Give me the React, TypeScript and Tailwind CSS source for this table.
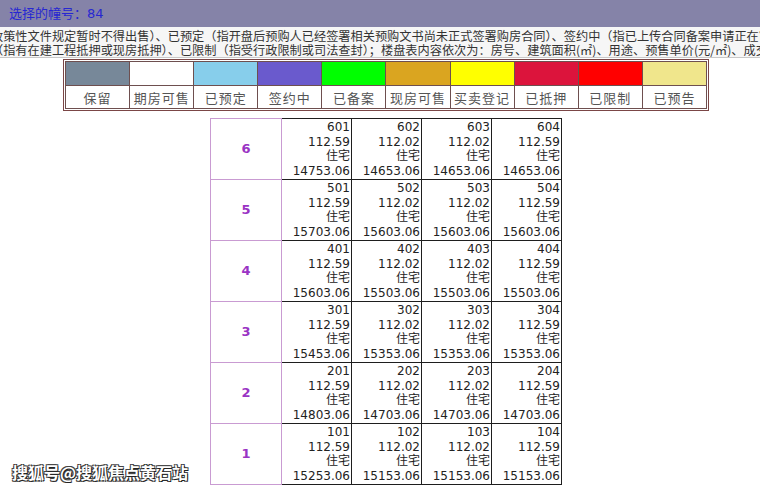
const legend = [
  { label: "保留", color: "bg-[#778899]" },
  { label: "期房可售", color: "bg-white" },
  { label: "已预定", color: "bg-[#87ceeb]" },
  { label: "签约中", color: "bg-[#6a5acd]" },
  { label: "已备案", color: "bg-[#00ff00]" },
  { label: "现房可售", color: "bg-[#daa520]" },
  { label: "买卖登记", color: "bg-[#ffff00]" },
  { label: "已抵押", color: "bg-[#dc143c]" },
  { label: "已限制", color: "bg-[#ff0000]" },
  { label: "已预告", color: "bg-[#f0e68c]" },
];

// floor, [unit price for x01, unit price for x02..x04]
const floors: [number, string, string][] = [
  [6, "14753.06", "14653.06"],
  [5, "15703.06", "15603.06"],
  [4, "15603.06", "15503.06"],
  [3, "15453.06", "15353.06"],
  [2, "14803.06", "14703.06"],
  [1, "15253.06", "15153.06"],
];

const areas = ["112.59", "112.02", "112.02", "112.59"];

export default function App() {
  return (
    <div className="relative h-[491px] w-[760px] overflow-hidden bg-white font-['DejaVu_Sans','Noto_Sans_CJK_SC',sans-serif]">
      <div className="flex h-[27px] items-center bg-[#8583a8] pl-[9px] text-[13px] text-[#2727d2]">
        选择的幢号：84
      </div>

      <div className="overflow-hidden whitespace-nowrap border-b border-[#c8c8c8] bg-[#f6f6f6] pt-[2px] font-['Noto_Sans_CJK_SC',sans-serif] text-[12.2px] leading-[14px] text-[#333]">
        <div className="-ml-[9px]">
          政策性文件规定暂时不得出售）、已预定（指开盘后预购人已经签署相关预购文书尚未正式签署购房合同）、签约中（指已上传合同备案申请正在审核中）、已备案（指已办理合同备案）
        </div>
        <div className="-ml-[9px]">
          （指有在建工程抵押或现房抵押）、已限制（指受行政限制或司法查封）；楼盘表内容依次为：房号、建筑面积(㎡)、用途、预售单价(元/㎡)、成交状态
        </div>
      </div>

      <div className="ml-[63px] mt-px w-[646px] border border-[#7b4646] p-px">
        <table className="w-full table-fixed border-collapse">
          <tbody>
            <tr>
              {legend.map((l) => (
                <td key={l.label} className={`h-[24px] border border-[#6e4f4f] ${l.color}`} />
              ))}
            </tr>
            <tr>
              {legend.map((l) => (
                <td
                  key={l.label}
                  className="h-[23px] border border-[#6e4f4f] bg-white text-center font-['Noto_Sans_CJK_SC',sans-serif] text-[13px] leading-none tracking-[1px] text-[#555]"
                >
                  {l.label}
                </td>
              ))}
            </tr>
          </tbody>
        </table>
      </div>

      <table className="ml-[210px] mt-[7px] w-[351px] table-fixed border-collapse text-[12px] leading-[14.5px] text-[#222]">
        <colgroup>
          <col className="w-[71px]" />
          <col className="w-[70px]" />
          <col className="w-[70px]" />
          <col className="w-[70px]" />
          <col className="w-[70px]" />
        </colgroup>
        <tbody>
          {floors.map(([f, p1, p2]) => (
            <tr key={f}>
              <td className="h-[61px] border border-[#c99bd2] text-center align-middle text-[13px] font-bold text-[#9a34c4]">
                {f}
              </td>
              {[1, 2, 3, 4].map((u) => (
                <td key={u} className="h-[61px] border border-[#1e1e1e] bg-white p-0 pr-px text-right align-middle">
                  <div>{`${f}0${u}`}</div>
                  <div>{areas[u - 1]}</div>
                  <div>住宅</div>
                  <div>{u === 1 ? p1 : p2}</div>
                </td>
              ))}
            </tr>
          ))}
        </tbody>
      </table>

      <div className="absolute left-[12px] top-[463px] font-['Noto_Sans_CJK_SC',sans-serif] text-[16px] font-bold leading-[18px] text-white [text-shadow:1px_1px_0_#222,-1px_-1px_0_#444,1px_-1px_0_#444,-1px_1px_0_#444]">
        搜狐号@搜狐焦点黄石站
      </div>
    </div>
  );
}
